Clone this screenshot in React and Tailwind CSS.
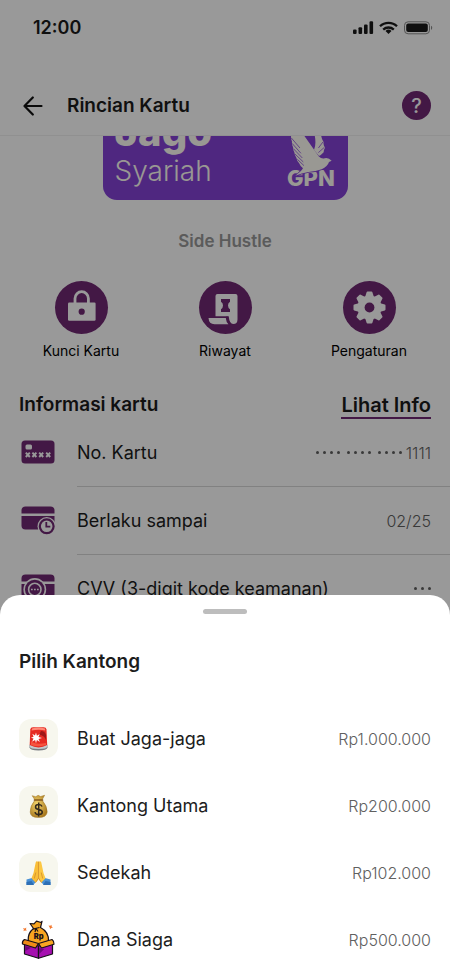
import React from "react";

const PURPLE = "#712873";

function StatusIcons() {
  return (
    <svg width="80" height="14" viewBox="0 0 80 14" aria-hidden="true">
      <g fill="#1a1a1a">
        <rect x="0" y="8.5" width="3.6" height="4.5" rx="1.1" />
        <rect x="5.5" y="6.2" width="3.6" height="6.8" rx="1.1" />
        <rect x="11" y="3.4" width="3.6" height="9.6" rx="1.1" />
        <rect x="16.5" y="0.3" width="3.6" height="12.7" rx="1.1" />
      </g>
      <g fill="none" stroke="#1a1a1a" strokeWidth="2.3">
        <path d="M27 5.3a12.2 12.2 0 0 1 17 0" />
        <path d="M30.2 8.6a7.8 7.8 0 0 1 10.6 0" />
      </g>
      <path d="M35.5 13l-3-3a4.4 4.4 0 0 1 6 0z" fill="#1a1a1a" />
      <rect x="51.5" y="0.8" width="25" height="12" rx="3.6" fill="none" stroke="#8a8a8a" />
      <rect x="53.2" y="2.5" width="21.6" height="8.6" rx="2" fill="#1a1a1a" />
      <path d="M78 4.8c1.7.8 1.7 3.3 0 4.1z" fill="#8a8a8a" />
    </svg>
  );
}

function ArrowLeft() {
  return (
    <svg width="20" height="20" viewBox="0 0 20 20" fill="none" stroke="#111" strokeWidth="2.2" strokeLinecap="round" strokeLinejoin="round" aria-hidden="true">
      <path d="M18.5 10H1.5M9.8 1.5L1.5 10l8.3 8.5" />
    </svg>
  );
}

function GpnLogo() {
  return (
    <svg width="60" height="65" viewBox="0 0 180 195" overflow="visible" role="img" aria-label="GPN">
      <text x="18" y="165" fontSize="66" fontWeight="800" fill="#fffdf5" fontFamily="Inter, sans-serif">GPN</text>
      <path d="M30 6L64 6L113 76Q122 85 131 82Q142 79 152 89L144 93Q140 106 122 115Q100 123 82 123Q62 126 43 134Q60 122 66 112Q58 106 54 96Q48 90 46 80Q41 74 40 64Q36 58 36 48Q32 42 33 32Q29 24 30 6Z" fill="#fffdf5" stroke="#8441d5" strokeWidth="5" paintOrder="stroke" />
      <path d="M100 8L120 6Q120 22 128 34Q126 40 132 50Q128 56 128 64Q121 72 114 75L99 57Q107 38 100 8Z" fill="#fffdf5" />
      <g stroke="#8441d5" strokeWidth="2.2" fill="none" strokeLinecap="round">
        <path d="M32 22L56 50M34 38L59 66M38 54L63 80M43 70L66 92M50 86L68 103" />
        <path d="M125 34L113 50M129 50L113 64" />
      </g>
    </svg>
  );
}

function LockIcon() {
  return (
    <svg width="53" height="53" viewBox="0 0 53 53" aria-hidden="true">
      <path d="M20 23v-5.600a6.700 6.700 0 0 1 13.400 0V23" fill="none" stroke="#fff" strokeWidth="2.8" />
      <rect x="13" y="21.6" width="27.6" height="18.2" rx="1.2" fill="#fff" />
      <circle cx="26.7" cy="30.7" r="3.1" fill={PURPLE} />
    </svg>
  );
}

function HistoryIcon() {
  return (
    <svg width="53" height="53" viewBox="0 0 53 53" aria-hidden="true">
      <path d="M16.500 35.200V15q0-2 2-2h18q2 0 2 2v23.500q0 4.500-4.300 4.500-3.700 0-4.500-7.800z" fill="#fff" />
      <path d="M9.500 37h17.300q.3 4 2.600 6.200H15.500q-5.600 0-6-6.200z" fill="#fff" />
      <path d="M28 35.500q.2 5.200 3.600 8" fill="none" stroke={PURPLE} strokeWidth="1.4" />
      <path d="M22 18h9v2.800q-2 1.300-2 3.700t2 3.700V31h-9v-2.800q2-1.300 2-3.700t-2-3.700z" fill={PURPLE} />
    </svg>
  );
}

function GearIcon() {
  const teeth = [0, 45, 90, 135, 180, 225, 270, 315];
  return (
    <svg width="53" height="53" viewBox="-26.5 -26.5 53 53" aria-hidden="true">
      {teeth.map((angle) => (
        <path key={angle} d="M-4.600-10L-2.900-15.300Q-2.700-16-2-16H2Q2.700-16 2.900-15.300L4.600-10z" fill="#fff" transform={`rotate(${angle})`} />
      ))}
      <circle r="12" fill="#fff" />
      <circle r="4.9" fill={PURPLE} />
    </svg>
  );
}

function CardNumberIcon() {
  return (
    <svg width="34" height="30" viewBox="0 1 34 30" aria-hidden="true">
      <rect x="0.5" y="3.5" width="33" height="23" rx="3.5" fill={PURPLE} />
      <rect x="4.5" y="7.5" width="6.5" height="5" rx="1.5" fill="#fff" />
      <path d="M4.800 15.600l4 4.400m0-4.400l-4 4.400M11.400 15.600l4 4.400m0-4.400l-4 4.400M18.200 15.600l4 4.400m0-4.400l-4 4.400M25.200 15.600l4 4.400m0-4.400l-4 4.400" stroke="#fff" strokeWidth="1.9" />
    </svg>
  );
}

function CardExpiryIcon() {
  return (
    <svg width="34" height="30" viewBox="0 1 34 30" aria-hidden="true">
      <path d="M.5 8.600V5.500Q.5 1.500 4.500 1.500h25q4 0 4 4v3.100z" fill={PURPLE} />
      <path d="M.5 11h33v13.500h-29q-4 0-4-4z" fill={PURPLE} />
      <circle cx="25.7" cy="21.3" r="9.2" fill="#fff" />
      <circle cx="25.7" cy="21.3" r="6.9" fill="#fff" stroke={PURPLE} strokeWidth="2.2" />
      <path d="M25.300 17v4.600h4" fill="none" stroke={PURPLE} strokeWidth="1.8" />
    </svg>
  );
}

function CardCvvIcon() {
  return (
    <svg width="34" height="30" viewBox="0 1 34 30" aria-hidden="true">
      <path d="M.5 8.600V5.500Q.5 1.500 4.500 1.500h25q4 0 4 4v3.100z" fill={PURPLE} />
      <path d="M.5 11h33v10q0 4-4 4h-25q-4 0-4-4z" fill={PURPLE} />
      <circle cx="13.8" cy="16.5" r="11.4" fill="#fff" />
      <circle cx="13.8" cy="16.5" r="9.8" fill={PURPLE} />
      <circle cx="13.8" cy="16.5" r="6.2" fill={PURPLE} stroke="#fff" strokeWidth="1.6" />
      <path d="M10 16.500h1.700m1.300 0h1.700m1.300 0h1.700" stroke="#fff" strokeWidth="1.7" />
    </svg>
  );
}

function SirenIcon() {
  return (
    <svg width="39" height="39" viewBox="0 0 39 39" aria-hidden="true">
      <path d="M10.500 26h18v2.500Q28 31.500 19.500 31.500T10.500 28.500z" fill="#777b80" />
      <path d="M10.500 25.500h18v2Q28 30 19.500 30T10.500 27.500z" fill="#c4c9cc" />
      <path d="M11.300 10.500Q11.500 8.300 14 8.200h10.600Q27.200 8.300 27.500 10.500l.7 15.500Q24 28.400 19.500 28.400T10.700 26z" fill="#e62a22" />
      <path d="M13 9.600Q19 7.600 26 9.600l.3 2Q20 9.800 12.600 11.600z" fill="#ff8a78" />
      <path d="M22 12q4 0 5 4v5q-2-5-7-5z" fill="#9f1717" />
      <path d="M12 22q4 4 15 2v2q-8 2.500-15 0z" fill="#f6543f" />
      <path d="M17 13.500l.9 3.200 2.800-1.600-1.200 3 3.500.8-3.500 1 1.400 3-3-1.800-.9 3.200-.9-3.400-3 1.800 1.400-3.100-2.500-.9 2.600-.9-1.300-3 2.700 1.800z" fill="#fff" />
    </svg>
  );
}

function MoneyBagIcon() {
  return (
    <svg width="39" height="39" viewBox="0 0 39 39" aria-hidden="true">
      <defs>
        <radialGradient id="bag" cx="0.4" cy="0.4" r="0.65">
          <stop offset="0" stopColor="#f5d66d" />
          <stop offset="1" stopColor="#a9791e" />
        </radialGradient>
      </defs>
      <path d="M16 14L13.200 9.700l3.600 1 2.300-1.400 2.500 1.200 4-1.200L23 14q5.500 6.500 5.200 12-.4 5.500-8.700 5.500T11.200 26q-.2-6 4.800-12z" fill="url(#bag)" stroke="#9d7424" strokeWidth="0.5" />
      <path d="M15.500 14h8" stroke="#86591b" strokeWidth="1.7" strokeLinecap="round" />
      <path d="M23 20.500q-.7-2-3.300-2-3.200 0-3.200 2.400 0 2 3.200 2.500 3.600.6 3.600 2.700 0 2.500-3.500 2.500-3.400 0-3.800-2.500M19.700 16.500v14" fill="none" stroke="#33291c" strokeWidth="1.5" />
    </svg>
  );
}

function PrayIcon() {
  return (
    <svg width="39" height="39" viewBox="0 0 39 39" aria-hidden="true">
      <path d="M7.500 26.500l5.500-1.500 4 4-3 3H7.500zM31.500 26.500L26 25l-4 4 3 3h6.500z" fill="#4a91d5" />
      <path d="M7.500 29l5-1 2.500 4H7.500zM31.500 29l-5-1-2.500 4h7.500z" fill="#2e6fb4" />
      <path d="M19.300 9q-1.700-1.500-2.600.4L14.500 20l-2 5.300 4.200 4.400 2.800-3.500z" fill="#f9be38" />
      <path d="M19.700 9q1.700-1.500 2.600.4L24.500 20l2 5.300-4.200 4.400-2.800-3.500z" fill="#fcc743" />
      <path d="M19.500 8.500v16.600l-3 4.400M19.500 25l3 4.500M16.800 19.500l-1.500 6M22.200 19.500l1.500 6" fill="none" stroke="#d7932a" strokeWidth="0.9" />
    </svg>
  );
}

function TreasureBoxIcon() {
  return (
    <svg width="39" height="39" viewBox="0 0 39 39" aria-hidden="true">
      <g stroke="#171019" strokeWidth="1.2" strokeLinejoin="round">
        <path d="M5.500 22l14 4v12.300L5.500 34z" fill="#a50fb0" />
        <path d="M33.500 22l-14 4v12.300l14-4.300z" fill="#a50fb0" />
        <path d="M14.500 8.500L11 3.500l4 .4L17.500 1.200l4.500 1.300 1-1.200-1.500 6.200q8.500 4.500 8 13.500l-10 4-10.300-4q-.6-8 5.300-12.500z" fill="#f8a521" />
        <path d="M5.500 19.500l14 4-3 4.500-13-4q-.6-2.700 2-4.500z" fill="#ef8b18" />
        <path d="M33 19.500l-13.500 4 3 4.500L35 24.200q.3-3-2-4.700z" fill="#f8a521" />
        <path d="M14 9l6.500-1.500M16 12l1-3.500 2 3" fill="none" />
      </g>
      <path d="M6.200 26l6 1.800-6 3.200zM20.200 28l5 1-5 5z" fill="#6d087c" />
      <text x="19.6" y="19.2" fontSize="7.5" fontWeight="900" textAnchor="middle" fill="#171019" fontFamily="Inter, sans-serif">Rp</text>
      <path d="M4 8l1.900.4L7.300 7.500 7 9.300l.7 1.500-1.800-.4-1.400.9.400-1.700zM29.500 5.400l1.700.3 1.300-1 .1 1.800 1.300 1.100-1.700.3-1.100 1.300-.4-1.800z" fill="#f37a32" />
    </svg>
  );
}

const actions = [
  { label: "Kunci Kartu", Icon: LockIcon },
  { label: "Riwayat", Icon: HistoryIcon },
  { label: "Pengaturan", Icon: GearIcon },
];

const details = [
  { label: "No. Kartu", value: "1111", dots: [4, 4, 4], Icon: CardNumberIcon },
  { label: "Berlaku sampai", value: "02/25", dots: [], Icon: CardExpiryIcon },
  { label: "CVV (3-digit kode keamanan)", value: "", dots: [3], Icon: CardCvvIcon },
];

const pockets = [
  { name: "Buat Jaga-jaga", amount: "Rp1.000.000", Icon: SirenIcon, tile: "bg-[#f7f7ee]" },
  { name: "Kantong Utama", amount: "Rp200.000", Icon: MoneyBagIcon, tile: "bg-[#f7f7ee]" },
  { name: "Sedekah", amount: "Rp102.000", Icon: PrayIcon, tile: "bg-[#f7f7ee]" },
  { name: "Dana Siaga", amount: "Rp500.000", Icon: TreasureBoxIcon, tile: "bg-white" },
];

function MaskedDots({ groups }) {
  return (
    <span className="flex gap-[7px]" aria-hidden="true">
      {groups.map((count, g) => (
        <span key={g} className="flex gap-1">
          {Array.from({ length: count }, (_, i) => (
            <span key={i} className="size-[3px] rounded-full bg-[#606060]" />
          ))}
        </span>
      ))}
    </span>
  );
}

export default function App() {
  return (
    <div className="relative h-screen overflow-hidden bg-white font-['Inter',sans-serif] text-[#1c1c1c]">
      <main>
        <div className="flex h-14 items-center justify-between pl-[33px] pr-[17px]">
          <span className="text-lg font-semibold">12:00</span>
          <StatusIcons />
        </div>

        <header className="flex h-20 items-center border-b border-[#f0f0f0] px-[19px] pt-5">
          <button type="button" aria-label="Kembali" className="flex w-12 items-center pl-1">
            <ArrowLeft />
          </button>
          <h1 className="flex-1 text-[19px] font-semibold leading-6">Rincian Kartu</h1>
          <button type="button" aria-label="Bantuan" className="flex size-[29px] items-center justify-center rounded-full bg-[#712873] text-xl font-medium text-white">
            ?
          </button>
        </header>

        <div className="flex h-16 items-end justify-center overflow-hidden">
          <div className="flex h-[154px] w-[245px] shrink-0 items-end justify-between rounded-[14px] bg-[#8441d5] pb-1 pl-3 pr-[7px] text-[#fffdf5]">
            <div className="pb-2">
              <p className="text-[40px] font-extrabold leading-[44px]">Jago</p>
              <p className="text-[28px] font-light leading-[34px]">Syariah</p>
            </div>
            <GpnLogo />
          </div>
        </div>

        <p className="pt-[29px] text-center text-[17px] font-semibold leading-6 text-[#989898]">Side Hustle</p>

        <div className="grid grid-cols-3 px-[9px] pt-7">
          {actions.map(({ label, Icon }) => (
            <button key={label} type="button" className="flex flex-col items-center gap-[7px] text-sm text-black">
              <span className="size-[53px] rounded-full bg-[#712873]">
                <Icon />
              </span>
              {label}
            </button>
          ))}
        </div>

        <section className="pt-8">
          <div className="flex items-start justify-between px-[19px]">
            <h2 className="text-[19px] font-semibold leading-6">Informasi kartu</h2>
            <a href="#info" className="border-b-2 border-[#712873] text-xl font-semibold leading-6">
              Lihat Info
            </a>
          </div>
          <ul>
            {details.map(({ label, value, dots, Icon }) => (
              <li key={label} className="flex pl-[21px]">
                <span className="flex w-14 items-center">
                  <Icon />
                </span>
                <span className="flex h-[68px] flex-1 items-center justify-between border-b border-[#d8d8d8] pr-[19px]">
                  <span className="text-lg">{label}</span>
                  <span className="flex items-center gap-1 text-base font-light text-[#606060]">
                    <MaskedDots groups={dots} />
                    {value && <span>{value}</span>}
                  </span>
                </span>
              </li>
            ))}
          </ul>
        </section>
      </main>

      <div className="absolute inset-0 bg-black/40" />

      <section aria-label="Pilih Kantong" className="absolute inset-x-0 bottom-0 rounded-t-[20px] bg-white pb-0.5 pt-[14px]">
        <div className="mx-auto h-[5px] w-11 rounded-full bg-[#bdbdbd]" />
        <h2 className="px-[19px] pb-[31px] pt-9 text-[19px] font-semibold leading-6">Pilih Kantong</h2>
        <ul>
          {pockets.map(({ name, amount, Icon, tile }) => (
            <li key={name}>
              <button type="button" className="flex h-[67px] w-full items-center px-[19px]">
                <span className={`size-[39px] rounded-xl ${tile}`}>
                  <Icon />
                </span>
                <span className="flex-1 pl-[19px] text-left text-lg">{name}</span>
                <span className="text-base font-light text-[#606060]">{amount}</span>
              </button>
            </li>
          ))}
        </ul>
      </section>
    </div>
  );
}
